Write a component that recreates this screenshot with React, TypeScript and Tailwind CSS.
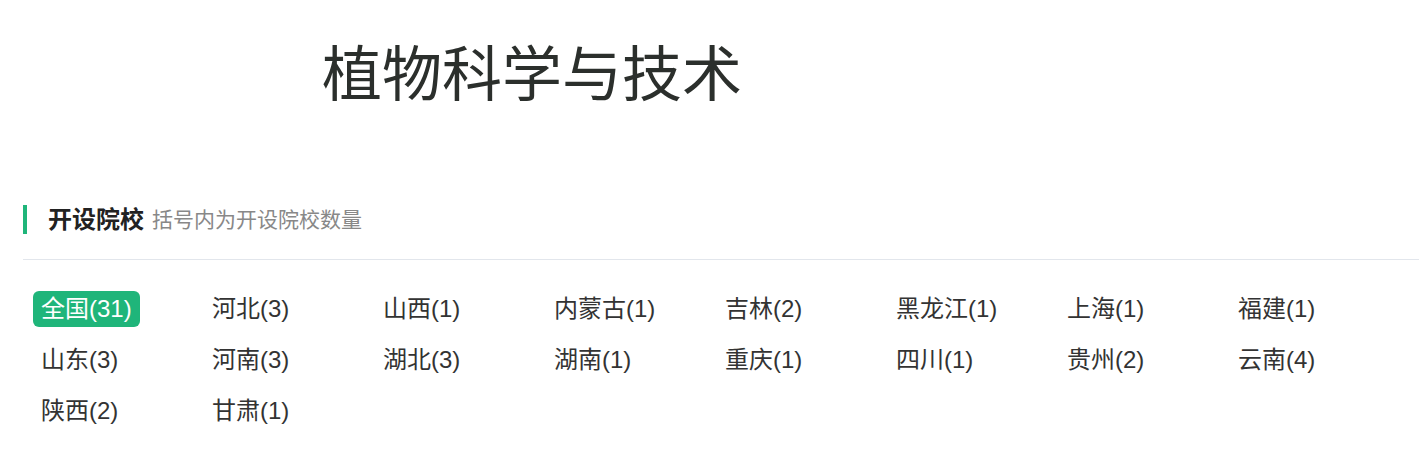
const PROVINCES: { name: string; count: number }[] = [
  { name: "全国", count: 31 },
  { name: "河北", count: 3 },
  { name: "山西", count: 1 },
  { name: "内蒙古", count: 1 },
  { name: "吉林", count: 2 },
  { name: "黑龙江", count: 1 },
  { name: "上海", count: 1 },
  { name: "福建", count: 1 },
  { name: "山东", count: 3 },
  { name: "河南", count: 3 },
  { name: "湖北", count: 3 },
  { name: "湖南", count: 1 },
  { name: "重庆", count: 1 },
  { name: "四川", count: 1 },
  { name: "贵州", count: 2 },
  { name: "云南", count: 4 },
  { name: "陕西", count: 2 },
  { name: "甘肃", count: 1 },
];

export default function App() {
  const active = "全国";

  return (
    <div
      className="min-h-[456px] w-[1419px] bg-white text-[#333]"
      style={{ fontFamily: '"Liberation Sans", Arial, "Noto Sans CJK SC", sans-serif' }}
    >
      <h1 className="pl-[322px] pt-[38px] text-[60px] leading-[76px] font-normal text-[#2b2f2c]">
        植物科学与技术
      </h1>

      <div className="ml-[23px] mt-[91px]">
        <div className="flex items-center border-l-4 border-[#1fb57a] h-[29px] pl-[21px]">
          <span className="text-[24px] font-bold text-[#222]">开设院校</span>
          <span className="ml-[8px] text-[21px] text-[#888]">括号内为开设院校数量</span>
        </div>
        <div className="mt-[25px] border-t border-[#e2e6ec]" />

        <div className="grid grid-cols-[repeat(8,171px)] pl-[10px] pt-[31px]">
          {PROVINCES.map((p) => (
            <div key={p.name} className="h-[51px]">
              <span
                className={
                  p.name === active
                    ? "inline-block h-[36px] leading-[36px] px-2 rounded-md bg-[#1fb57a] text-white text-[24px]"
                    : "inline-block h-[36px] leading-[36px] px-2 text-[24px] text-[#333]"
                }
              >
                {p.name}({p.count})
              </span>
            </div>
          ))}
        </div>
      </div>
    </div>
  );
}
